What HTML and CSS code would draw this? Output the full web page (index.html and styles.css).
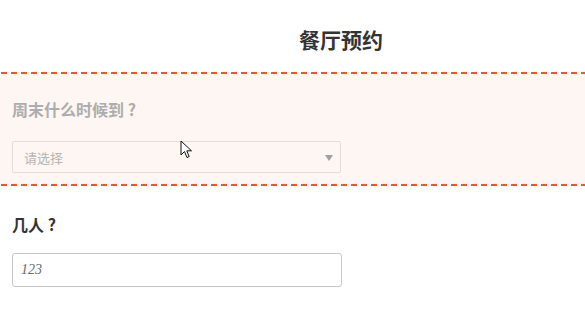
FILE: index.html
```html
<!DOCTYPE html>
<html lang="zh">
<head>
<meta charset="utf-8">
<title>餐厅预约</title>
<link rel="stylesheet" href="styles.css">
</head>
<body>
<div class="page">
  <header class="header"><h1 class="title">餐厅预约</h1></header>
  <section class="field field--active">
    <div class="field-label">周末什么时候到 ?</div>
    <div class="select">
      <span class="select-placeholder">请选择</span>
      <span class="select-arrow"></span>
    </div>
    <svg class="cursor" width="13" height="20" viewBox="0 0 13 20">
      <path d="M1 1 L1 15 L4.5 11.5 L7 17.5 L9.2 16.6 L6.8 10.8 L11.5 10.8 Z" fill="#fff" stroke="#111" stroke-width="1" stroke-linejoin="round"/>
    </svg>
  </section>
  <section class="field">
    <div class="field-label field-label--dark">几人 ?</div>
    <div class="input"><span class="input-placeholder">123</span></div>
  </section>
</div>
</body>
</html>
```

FILE: styles.css
```css
html, body {
  margin: 0;
  padding: 0;
  background: #ffffff;
}
.page {
  width: 585px;
  font-family: "Noto Sans CJK SC", "Noto Sans", sans-serif;
}
.header {
  height: 72px;
  display: flex;
  align-items: center;
  justify-content: center;
  padding-left: 97px;
  box-sizing: border-box;
}
.title {
  margin: 0;
  padding-top: 6px;
  font-size: 21px;
  font-weight: 700;
  color: #333333;
  line-height: 28px;
}
.field {
  position: relative;
  padding: 26px 12px 0;
  display: flex;
  flex-direction: column;
  gap: 17px;
}
.field--active {
  padding: 25px 12px 13px;
  gap: 20px;
  background-color: #fdf6f2;
  background-image:
    repeating-linear-gradient(to right, transparent 0 1px, #f2542a 1px 7px, transparent 7px 10px),
    repeating-linear-gradient(to right, transparent 0 1px, #f2542a 1px 7px, transparent 7px 10px);
  background-size: 100% 2px, 100% 2px;
  background-position: 0 0, 0 100%;
  background-repeat: no-repeat;
}
.field-label {
  font-size: 16px;
  font-weight: 700;
  line-height: 24px;
  color: #adadad;
}
.field-label--dark {
  color: #333333;
}
.select {
  width: 329px;
  height: 32px;
  box-sizing: border-box;
  border: 1px solid #e2dcda;
  border-radius: 2px;
  display: flex;
  align-items: center;
  justify-content: space-between;
  padding: 0 7px 0 11px;
}
.select-placeholder {
  font-size: 13px;
  color: #b5b5b5;
}
.select-arrow {
  width: 0;
  height: 0;
  border-left: 4px solid transparent;
  border-right: 4px solid transparent;
  border-top: 6px solid #a0a0a0;
  margin-top: 2px;
}
.cursor {
  position: absolute;
  left: 180px;
  top: 68px;
}
.input {
  width: 330px;
  height: 34px;
  box-sizing: border-box;
  border: 1px solid #c6c6c6;
  border-radius: 3px;
  display: flex;
  align-items: center;
  padding-left: 8px;
}
.input-placeholder {
  font-family: "Liberation Serif", "DejaVu Serif", serif;
  font-style: italic;
  font-size: 14px;
  color: #6a6a6a;
}
```
